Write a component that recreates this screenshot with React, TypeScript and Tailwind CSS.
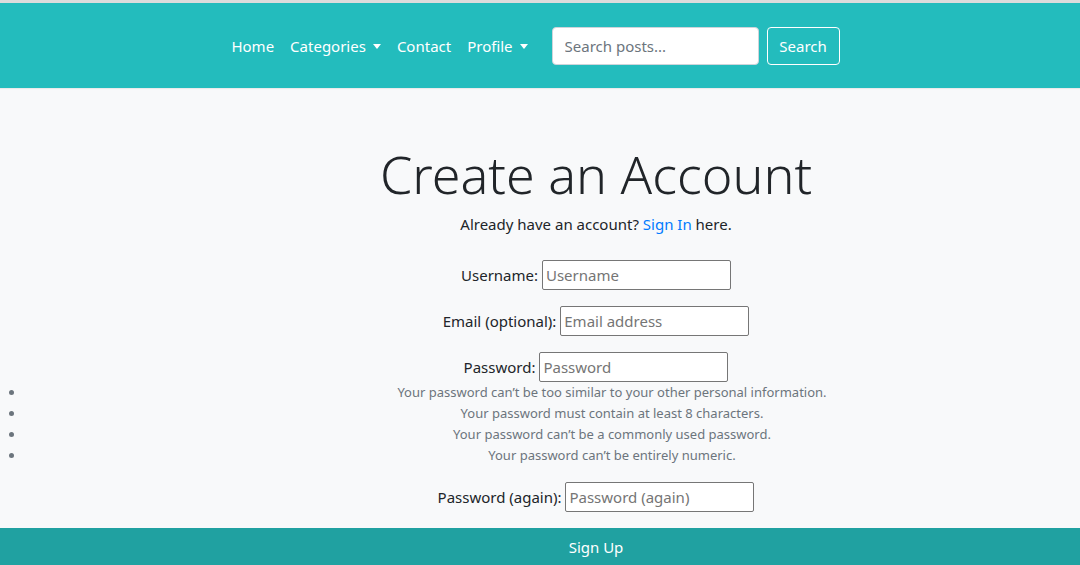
import React from "react";

function Caret() {
  return (
    <span className="ml-[7px] inline-block h-0 w-0 border-x-[4px] border-t-[5px] border-x-transparent border-t-white align-[3px]" />
  );
}

const inputCls =
  "h-[30px] w-[189px] rounded-[2px] border border-[#767676] bg-white px-[3px] text-[15px] placeholder:text-[#757575] outline-none";

export default function App() {
  return (
    <div className="min-h-[565px] bg-[#f8f9fa] text-[#212529] text-[15px] leading-[24px] [font-family:'Noto_Sans',sans-serif]">
      <div className="h-[3px] bg-[#dcdcdc]" />
      <nav className="flex h-[85px] items-center justify-center bg-[#23bcbd] pr-[17px] shadow-[0_1px_1px_rgba(0,0,0,0.06)]">
        <ul className="flex items-center text-white">
          <li className="px-[8px]">Home</li>
          <li className="px-[8px]">
            Categories
            <Caret />
          </li>
          <li className="px-[8px]">Contact</li>
          <li className="px-[8px]">
            Profile
            <Caret />
          </li>
        </ul>
        <div className="ml-[16px] flex items-center">
          <input
            className="h-[38px] w-[207px] rounded-[4px] border border-[#ced4da] bg-white px-[12px] text-[15px] text-[#495057] placeholder:text-[#6c757d] outline-none"
            placeholder="Search posts..."
          />
          <button className="ml-[8px] h-[38px] w-[73px] rounded-[4px] border border-white text-white">
            Search
          </button>
        </div>
      </nav>
      <main className="text-center">
        <div className="pl-[112px]">
          <h1 className="mt-[52px] text-[52px] font-light leading-[67px] text-[#212529]">
            Create an Account
          </h1>
          <p className="mt-[5px] mb-[24px]">
            Already have an account? <span className="text-[#007bff]">Sign In</span> here.
          </p>
        </div>
        <form>
          <p className="mb-[16px] pl-[112px]">
            <label>Username:</label>{" "}
            <input className={inputCls} placeholder="Username" />
          </p>
          <p className="mb-[16px] pl-[112px]">
            <label>Email (optional):</label>{" "}
            <input className={inputCls} placeholder="Email address" />
          </p>
          <div className="mb-[16px]">
            <p className="pl-[112px]">
              <label>Password:</label>{" "}
              <input className={inputCls} placeholder="Password" />
            </p>
            <ul className="list-disc pl-[25px] text-[13px] leading-[21px] text-[#6c757d]">
              <li className="pl-[119px]">Your password can’t be too similar to your other personal information.</li>
              <li className="pl-[119px]">Your password must contain at least 8 characters.</li>
              <li className="pl-[119px]">Your password can’t be a commonly used password.</li>
              <li className="pl-[119px]">Your password can’t be entirely numeric.</li>
            </ul>
          </div>
          <p className="mb-[16px] pl-[112px]">
            <label>Password (again):</label>{" "}
            <input className={inputCls} placeholder="Password (again)" />
          </p>
          <button
            type="button"
            className="block h-[38px] w-full bg-[#20a1a1] pl-[112px] text-white"
          >
            Sign Up
          </button>
        </form>
      </main>
    </div>
  );
}
